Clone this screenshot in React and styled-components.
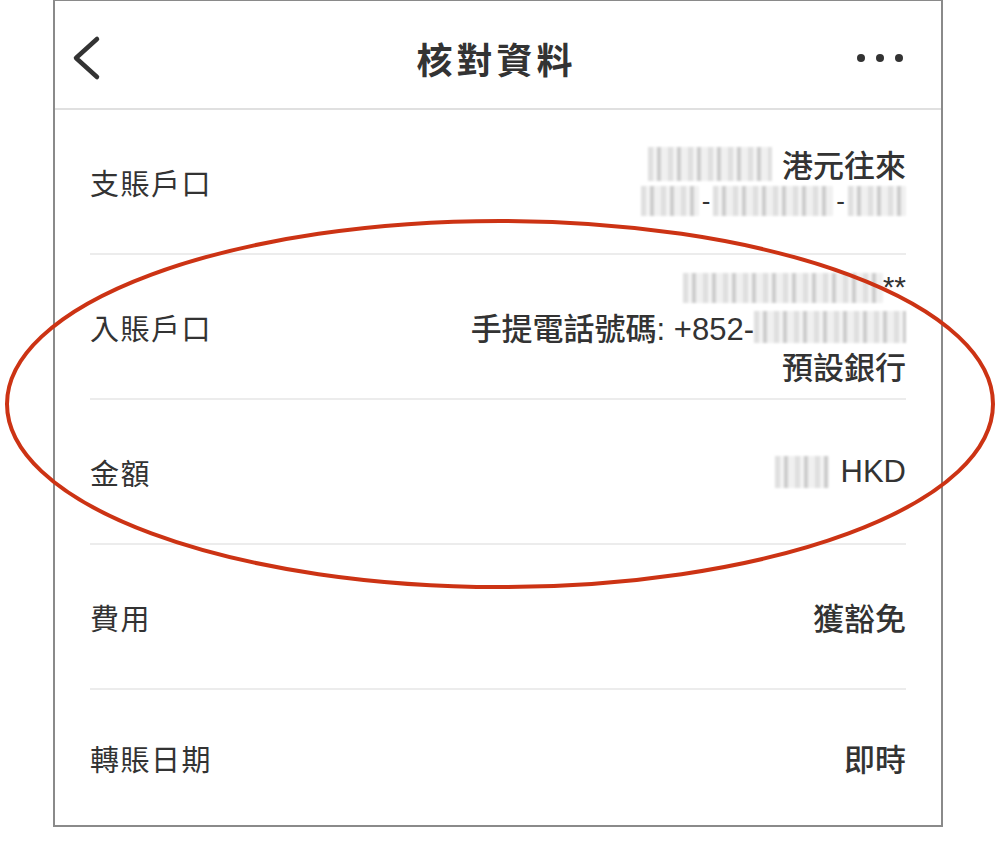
import styled, { createGlobalStyle } from 'styled-components'

const GlobalStyle = createGlobalStyle`
  body {
    margin: 0;
    background: #fff;
    font-family: "Liberation Sans", "Noto Sans CJK TC", sans-serif;
    color: #333;
  }
`

function Blur({ w, h = 34 }) {
  return <Smudge style={{ width: w, height: h }} />
}

function App() {
  return (
    <>
      <GlobalStyle />
      <Page>
        <Screen>
          <Header>
            <IconBtn $side="left">
              <svg width="30" height="46" viewBox="0 0 30 46">
                <path d="M25 4 L4 23 L25 42" fill="none" stroke="#333" strokeWidth="4.5" strokeLinecap="round" strokeLinejoin="round" />
              </svg>
            </IconBtn>
            <Title>核對資料</Title>
            <IconBtn $side="right">
              <svg width="50" height="12" viewBox="0 0 50 12">
                <circle cx="6" cy="6" r="4" fill="#333" />
                <circle cx="25" cy="6" r="4" fill="#333" />
                <circle cx="44" cy="6" r="4" fill="#333" />
              </svg>
            </IconBtn>
          </Header>
          <List>
            <Row>
              <Label>支賬戶口</Label>
              <Value>
                <Line><Blur w={124} /><Gap /><span>港元往來</span></Line>
                <Line $blurLine><Blur w={58} h={30} /><Dash>-</Dash><Blur w={120} h={30} /><Dash>-</Dash><Blur w={58} h={30} /></Line>
              </Value>
            </Row>
            <Row>
              <Label>入賬戶口</Label>
              <Value>
                <Line><Blur w={200} h={30} /><Stars>**</Stars></Line>
                <Line><span>手提電話號碼: +852-</span><Blur w={152} h={32} /></Line>
                <Line>預設銀行</Line>
              </Value>
            </Row>
            <Row>
              <Label>金額</Label>
              <Value>
                <Line><Blur w={54} h={32} /><Gap $w={12} /><span>HKD</span></Line>
              </Value>
            </Row>
            <Row>
              <Label>費用</Label>
              <Value><Line>獲豁免</Line></Value>
            </Row>
            <Row $last>
              <Label>轉賬日期</Label>
              <Value><Line>即時</Line></Value>
            </Row>
          </List>
          <Ring viewBox="0 0 1000 843" width="1000" height="843">
            <ellipse cx="500" cy="404" rx="493" ry="183" fill="none" stroke="#cc3314" strokeWidth="4" />
          </Ring>
        </Screen>
      </Page>
    </>
  )
}

export default App

const Page = styled.div`
  width: 1000px;
  height: 843px;
  position: relative;
  overflow: hidden;
`
const Screen = styled.div`
  margin-left: 53px;
  width: 886px;
  height: 824px;
  border: 2px solid #8a8a8a;
  border-top-width: 1px;
  background: #fff;
  display: flex;
  flex-direction: column;
`
const Header = styled.div`
  height: 104px;
  padding-top: 6px;
  border-bottom: 2px solid #e0e0e0;
  display: flex;
  align-items: center;
  justify-content: space-between;
  padding-left: 17px;
  padding-right: 34px;
`
const IconBtn = styled.div`
  width: 54px;
  display: flex;
  align-items: center;
  justify-content: ${p => (p.$side === 'left' ? 'flex-start' : 'center')};
`
const Title = styled.div`
  font-family: "Noto Sans CJK TC", sans-serif;
  font-size: 36px;
  font-weight: 700;
  letter-spacing: 4px;
  color: #333;
  padding-left: 14px;
`
const List = styled.div`
  flex: 1;
  display: flex;
  flex-direction: column;
  padding: 0 35px;
`
const Row = styled.div`
  height: ${p => (p.$last ? '135px' : '143px')};
  border-bottom: ${p => (p.$last ? 'none' : '2px solid #ececec')};
  display: flex;
  align-items: center;
  justify-content: space-between;
`
const Label = styled.div`
  font-family: "Noto Sans CJK TC", sans-serif;
  font-size: 29px;
  letter-spacing: 1.5px;
  color: #333;
`
const Value = styled.div`
  display: flex;
  flex-direction: column;
  align-items: flex-end;
  font-size: 31px;
  font-weight: 500;
  color: #333;
`
const Line = styled.div`
  display: flex;
  align-items: center;
  height: ${p => (p.$blurLine ? '36px' : '39px')};
  white-space: nowrap;
`
const Gap = styled.span`
  display: inline-block;
  width: ${p => p.$w || 10}px;
`
const Smudge = styled.span`
  display: inline-block;
  background: repeating-linear-gradient(90deg, #dcdcdc 0 5px, #f2f2f2 5px 9px, #c9c9c9 9px 13px, #efefef 13px 20px);
  filter: blur(1.2px);
  opacity: 0.9;
`
const Dash = styled.span`
  font-size: 26px;
  padding: 0 3px;
  line-height: 1;
`
const Stars = styled.span`
  font-size: 30px;
  align-self: flex-start;
  line-height: 1;
  margin-top: 4px;
`
const Ring = styled.svg`
  position: absolute;
  left: 0;
  top: 0;
  pointer-events: none;
`
